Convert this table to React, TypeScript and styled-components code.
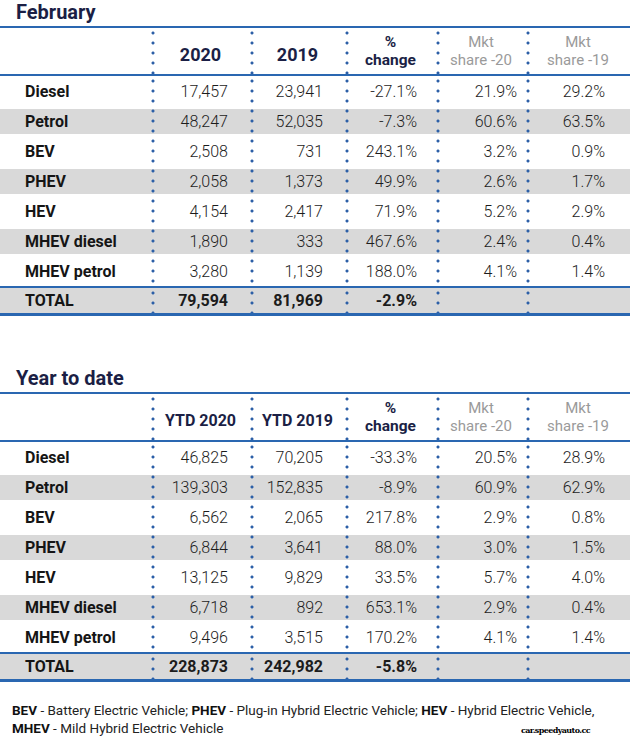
import React from 'react'
import styled, { createGlobalStyle } from 'styled-components'

const GlobalStyle = createGlobalStyle`
  body {
    margin: 0;
    background: #fff;
    font-family: Roboto, "Liberation Sans", sans-serif;
  }
`

const BLUE = '#2a67b1'
const NAVY = '#1b1f45'
const SHADE = '#d9d9d9'
const COLS = '151px 99px 95px 91px 90px 1fr'
const PADS = [0, 22, 22, 19, 9, 25]
const DOTS = 'radial-gradient(circle at 2px 5px, #2c5fa7 1.25px, transparent 1.8px)'

type TableData = {
  title: string
  years: [string, string]
  yearSize: number
  rows: string[][]
  total: string[]
}

const february: TableData = {
  title: 'February',
  years: ['2020', '2019'],
  yearSize: 18,
  rows: [
    ['Diesel', '17,457', '23,941', '-27.1%', '21.9%', '29.2%'],
    ['Petrol', '48,247', '52,035', '-7.3%', '60.6%', '63.5%'],
    ['BEV', '2,508', '731', '243.1%', '3.2%', '0.9%'],
    ['PHEV', '2,058', '1,373', '49.9%', '2.6%', '1.7%'],
    ['HEV', '4,154', '2,417', '71.9%', '5.2%', '2.9%'],
    ['MHEV diesel', '1,890', '333', '467.6%', '2.4%', '0.4%'],
    ['MHEV petrol', '3,280', '1,139', '188.0%', '4.1%', '1.4%'],
  ],
  total: ['TOTAL', '79,594', '81,969', '-2.9%', '', ''],
}

const ytd: TableData = {
  title: 'Year to date',
  years: ['YTD 2020', 'YTD 2019'],
  yearSize: 16,
  rows: [
    ['Diesel', '46,825', '70,205', '-33.3%', '20.5%', '28.9%'],
    ['Petrol', '139,303', '152,835', '-8.9%', '60.9%', '62.9%'],
    ['BEV', '6,562', '2,065', '217.8%', '2.9%', '0.8%'],
    ['PHEV', '6,844', '3,641', '88.0%', '3.0%', '1.5%'],
    ['HEV', '13,125', '9,829', '33.5%', '5.7%', '4.0%'],
    ['MHEV diesel', '6,718', '892', '653.1%', '2.9%', '0.4%'],
    ['MHEV petrol', '9,496', '3,515', '170.2%', '4.1%', '1.4%'],
  ],
  total: ['TOTAL', '228,873', '242,982', '-5.8%', '', ''],
}

const Page = styled.div`
  width: 630px;
  display: flex;
  flex-direction: column;
`

const Section = styled.section<{ $gap?: number }>`
  margin-top: ${({ $gap }) => $gap || 0}px;
`

const Title = styled.h2`
  margin: 0;
  padding: 0 0 2px 16px;
  font-size: 20px;
  line-height: 24px;
  font-weight: 700;
  color: ${NAVY};
`

const Table = styled.div`
  border-top: 2px solid ${BLUE};
`

const HeadRow = styled.div`
  display: grid;
  grid-template-columns: ${COLS};
  height: 46px;
  border-bottom: 2px solid ${BLUE};
`

const HeadCell = styled.div<{ $sep?: boolean; $muted?: boolean; $size: number; $drop?: number }>`
  display: flex;
  flex-direction: column;
  align-items: center;
  justify-content: center;
  padding-top: ${({ $drop }) => $drop || 0}px;
  font-size: ${({ $size }) => $size}px;
  line-height: 18px;
  font-weight: ${({ $muted }) => ($muted ? 400 : 700)};
  color: ${({ $muted }) => ($muted ? '#9a9a9a' : NAVY)};
  background-image: ${({ $sep }) => ($sep ? DOTS : 'none')};
  background-size: 4px 10px;
  background-repeat: repeat-y;
`

const Row = styled.div<{ $shaded?: boolean }>`
  display: grid;
  grid-template-columns: ${COLS};
  height: 30px;
  background: ${({ $shaded }) =>
    $shaded
      ? `linear-gradient(to bottom, transparent 3px, ${SHADE} 3px, ${SHADE} 28px, transparent 28px)`
      : 'none'};
`

const TotalRow = styled.div`
  display: grid;
  grid-template-columns: ${COLS};
  height: 25px;
  background: ${SHADE};
  border-top: 2px solid ${BLUE};
  border-bottom: 3px solid ${BLUE};
`

const Cell = styled.div<{ $sep?: boolean; $pad: number; $bold?: boolean }>`
  display: flex;
  align-items: center;
  justify-content: flex-end;
  padding-right: ${({ $pad }) => $pad}px;
  font-size: 16px;
  font-weight: ${({ $bold }) => ($bold ? 700 : 300)};
  color: #1c1c1c;
  background-image: ${({ $sep }) => ($sep ? DOTS : 'none')};
  background-size: 4px 10px;
  background-repeat: repeat-y;
  white-space: nowrap;
`

const Label = styled.div`
  display: flex;
  align-items: center;
  padding-left: 25px;
  font-size: 16px;
  font-weight: 700;
  color: #151515;
  white-space: nowrap;
`

const Footnote = styled.div`
  margin-top: 19px;
  padding-left: 12px;
  font-size: 13.5px;
  line-height: 18px;
  color: #222;
  b {
    font-weight: 700;
    color: #111;
  }
`

const NoteLine = styled.div`
  display: flex;
  align-items: baseline;
  justify-content: space-between;
  padding-right: 40px;
  white-space: nowrap;
`

const Watermark = styled.span`
  font-family: "DejaVu Serif", "Liberation Serif", serif;
  font-size: 8px;
  font-weight: 700;
  color: #000;
  letter-spacing: -0.6px;
`

const DataTable = ({ data, gap }: { data: TableData; gap?: number }) => (
  <Section $gap={gap}>
    <Title>{data.title}</Title>
    <Table>
      <HeadRow>
        <HeadCell $size={16} />
        <HeadCell $sep $size={data.yearSize} $drop={8}>{data.years[0]}</HeadCell>
        <HeadCell $sep $size={data.yearSize} $drop={8}>{data.years[1]}</HeadCell>
        <HeadCell $sep $size={15.5}>
          <span>%</span>
          <span>change</span>
        </HeadCell>
        <HeadCell $sep $muted $size={15}>
          <span>Mkt</span>
          <span>share -20</span>
        </HeadCell>
        <HeadCell $sep $muted $size={15}>
          <span>Mkt</span>
          <span>share -19</span>
        </HeadCell>
      </HeadRow>
      {data.rows.map((r, i) => (
        <Row key={r[0]} $shaded={i % 2 === 1}>
          <Label>{r[0]}</Label>
          {r.slice(1).map((v, j) => (
            <Cell key={j} $sep $pad={PADS[j + 1]}>{v}</Cell>
          ))}
        </Row>
      ))}
      <TotalRow>
        <Label>{data.total[0]}</Label>
        {data.total.slice(1).map((v, j) => (
          <Cell key={j} $sep $bold $pad={PADS[j + 1]}>{v}</Cell>
        ))}
      </TotalRow>
    </Table>
  </Section>
)

export default function App() {
  return (
    <Page>
      <GlobalStyle />
      <DataTable data={february} />
      <DataTable data={ytd} gap={50} />
      <Footnote>
        <NoteLine>
          <span>
            <b>BEV</b> - Battery Electric Vehicle; <b>PHEV</b> - Plug-in Hybrid Electric Vehicle;{' '}
            <b>HEV</b> - Hybrid Electric Vehicle,
          </span>
        </NoteLine>
        <NoteLine>
          <span>
            <b>MHEV</b> - Mild Hybrid Electric Vehicle
          </span>
          <Watermark>car.speedyauto.cc</Watermark>
        </NoteLine>
      </Footnote>
    </Page>
  )
}
